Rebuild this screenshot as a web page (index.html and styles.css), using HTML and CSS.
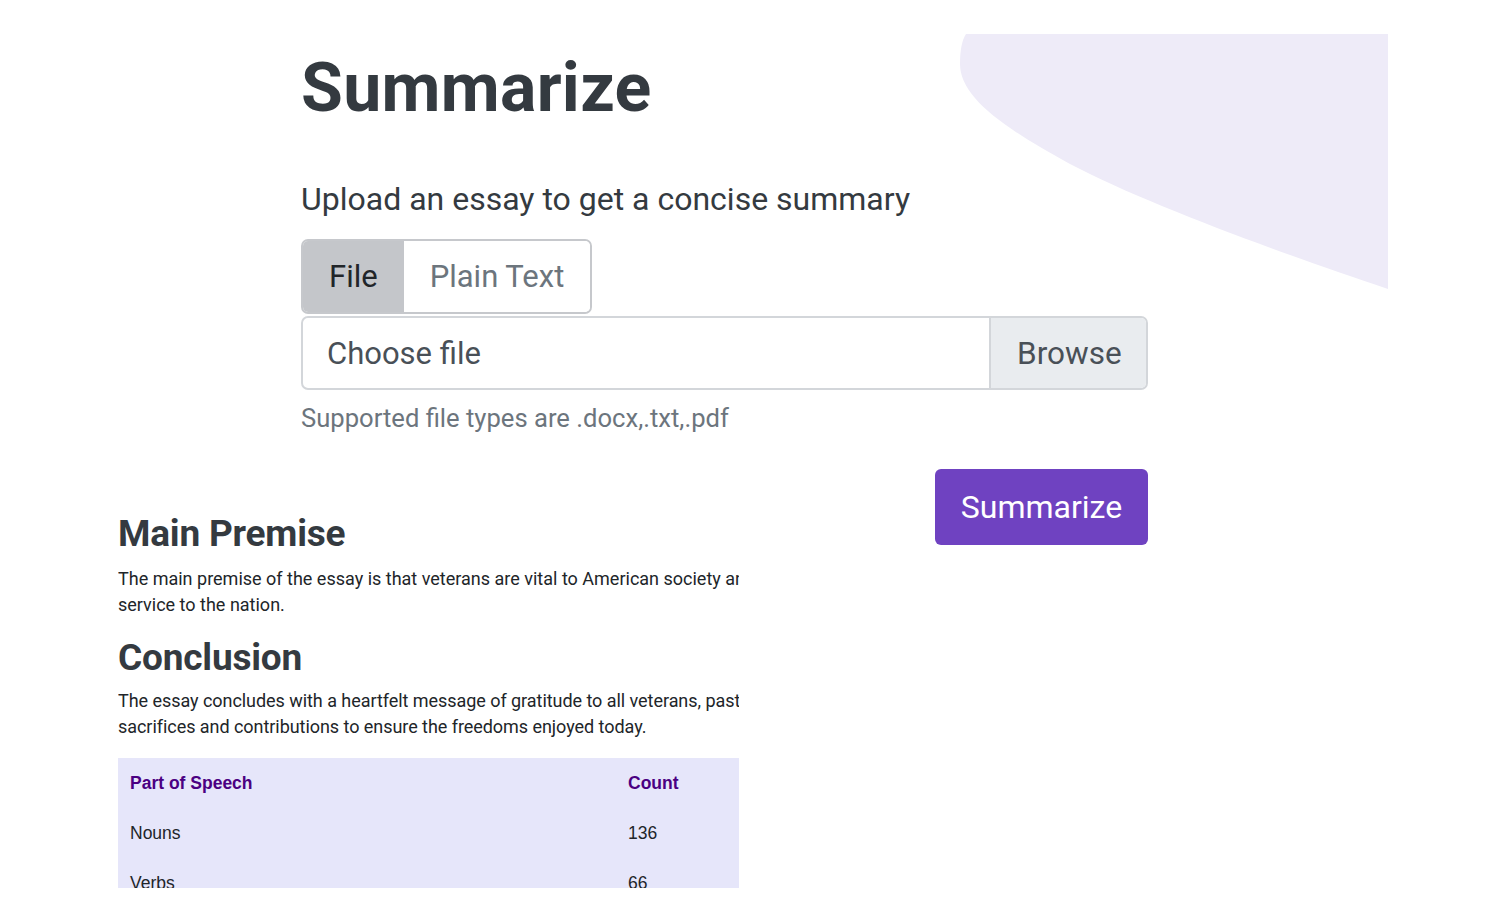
FILE: index.html
```html
<!DOCTYPE html>
<html lang="en">
<head>
<meta charset="utf-8">
<title>Summarize</title>
<link rel="stylesheet" href="styles.css">
</head>
<body>
<div class="page">
  <svg class="blob" width="430" height="258" viewBox="0 0 430 258" aria-hidden="true">
    <path d="M6 0 H428 V255 C330 222 190 172 110 130 C40 92 0 62 0 30 C0 16 2 6 6 0 Z" fill="#eeebf8"/>
  </svg>
  <div class="form">
    <h1 class="title">Summarize</h1>
    <p class="lead">Upload an essay to get a concise summary</p>
    <div class="toggle">
      <span class="toggle-btn active">File</span>
      <span class="toggle-btn">Plain Text</span>
    </div>
    <div class="file-input">
      <span class="file-label">Choose file</span>
      <span class="file-browse">Browse</span>
    </div>
    <p class="help">Supported file types are .docx,.txt,.pdf</p>
  </div>
  <div class="action-row">
    <div class="results">
      <div class="results-inner">
        <h2 class="sec-title">Main Premise</h2>
        <p class="sec-text">The main premise of the essay is that veterans are vital to American society and deserve recognition for their sacrifices and<br>service to the nation.</p>
        <h2 class="sec-title">Conclusion</h2>
        <p class="sec-text sec-text-tight">The essay concludes with a heartfelt message of gratitude to all veterans, past, present and future, for their<br>sacrifices and contributions to ensure the freedoms enjoyed today.</p>
      </div>
      <table class="pos-table">
        <thead>
          <tr><th class="c1">Part of Speech</th><th>Count</th></tr>
        </thead>
        <tbody>
          <tr><td class="c1">Nouns</td><td>136</td></tr>
          <tr><td class="c1">Verbs</td><td>66</td></tr>
          <tr><td class="c1">Adjectives</td><td>40</td></tr>
        </tbody>
      </table>
    </div>
    <button class="submit">Summarize</button>
  </div>
</div>
</body>
</html>
```

FILE: styles.css
```css
html, body {
  margin: 0;
  padding: 0;
  background: #ffffff;
}
body {
  font-family: Roboto, "Liberation Sans", Arial, sans-serif;
  color: #343a40;
  height: 922px;
  overflow: hidden;
}
.page {
  position: relative;
  width: 1030px;
  padding-left: 118px;
}
.blob {
  position: absolute;
  left: 960px;
  top: 34px;
  z-index: 0;
}
.form {
  position: relative;
  z-index: 1;
  margin-left: 183px;
  width: 847px;
}
.title {
  margin: 0;
  padding-top: 48px;
  font-family: Roboto, sans-serif;
  font-weight: 700;
  font-size: 68px;
  line-height: 80px;
  color: #343a40;
  letter-spacing: 0.3px;
}
.lead {
  margin: 51px 0 0 0;
  font-size: 32px;
  line-height: 40px;
  color: #343a40;
}
.toggle {
  display: inline-flex;
  margin-top: 20px;
  border: 2px solid #c6c8cc;
  border-radius: 7px;
  overflow: hidden;
  height: 71px;
}
.toggle-btn {
  display: flex;
  align-items: center;
  padding: 0 26px;
  font-size: 31px;
  color: #6c757d;
  background: #ffffff;
}
.toggle-btn.active {
  background: #c4c6ca;
  color: #212529;
}
.file-input {
  display: flex;
  margin-top: 2px;
  height: 70px;
  border: 2px solid #d3d6da;
  border-radius: 7px;
  overflow: hidden;
}
.file-label {
  flex: 1;
  display: flex;
  align-items: center;
  padding-left: 24px;
  font-size: 31px;
  color: #495057;
}
.file-browse {
  display: flex;
  align-items: center;
  width: 129px;
  padding-left: 26px;
  border-left: 2px solid #d3d6da;
  background: #e9ecef;
  font-size: 31.5px;
  color: #495057;
}
.help {
  margin: 12px 0 0 0;
  font-size: 25.6px;
  line-height: 32px;
  color: #6c757d;
}
.action-row {
  position: relative;
  z-index: 1;
  display: flex;
  justify-content: space-between;
  align-items: flex-start;
  margin-top: 35px;
}
.results {
  width: 621px;
  height: 378px;
  margin-top: 41px;
  overflow: hidden;
}
.results-inner {
  width: 900px;
}
.sec-title {
  margin: 0;
  font-weight: 700;
  font-size: 37px;
  line-height: 48px;
  color: #343a40;
  letter-spacing: -0.2px;
}
.sec-text {
  margin: 8px 0 16px 0;
  font-size: 18px;
  line-height: 26px;
  color: #212529;
  white-space: nowrap;
  letter-spacing: 0;
}
.sec-text-tight {
  margin-top: 6px;
  letter-spacing: -0.05px;
}
.pos-table {
  width: 621px;
  margin-top: 18px;
  border-collapse: collapse;
  background: #e6e6fa;
  font-family: "Liberation Sans", Arial, sans-serif;
  font-size: 17.5px;
}
.pos-table th {
  text-align: left;
  color: #4b0082;
  font-weight: 700;
  height: 50px;
  padding: 0 12px;
}
.pos-table td {
  height: 50px;
  padding: 0 12px;
  color: #212529;
}
.pos-table .c1 {
  width: 474px;
}
.submit {
  flex: none;
  width: 213px;
  height: 76px;
  border: none;
  border-radius: 6px;
  background: #6f42c1;
  color: #ffffff;
  font-family: Roboto, sans-serif;
  font-size: 32px;
}
```
